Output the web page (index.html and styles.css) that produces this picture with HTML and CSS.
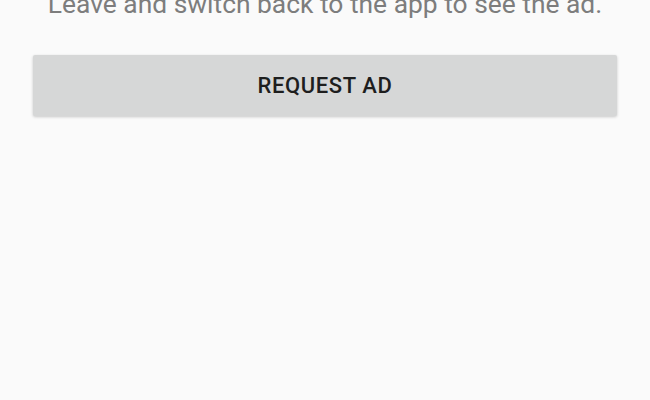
FILE: index.html
```html
<!DOCTYPE html>
<html lang="en">
<head>
    <meta charset="UTF-8">
    <meta name="viewport" content="width=device-width, initial-scale=1.0">
    <title>Ad Demo</title>
    <link rel="stylesheet" href="styles.css">
</head>
<body>
    <div class="layar">
        <!-- Keterangan -->
        <p class="info">Leave and switch back to the app to see the ad.</p>

        <!-- Tombol -->
        <button class="tombol-iklan">REQUEST AD</button>
    </div>
</body>
</html>
```
FILE: styles.css
```css
body {
    margin: 0;
    background-color: #fafafa;
    font-family: Roboto, "Noto Sans", sans-serif;
    height: 100vh;
    overflow: hidden;
}

.layar {
    display: flex;
    flex-direction: column;
    padding: 0 33px;
    margin-top: -12px;
}

.info {
    margin: 0;
    font-size: 26.4px;
    line-height: 32px;
    color: #7d7d7d;
    text-align: center;
}

.tombol-iklan {
    margin-top: 35px;
    height: 61px;
    border: none;
    border-radius: 2px;
    background-color: #d6d7d7;
    color: #1e1e1e;
    font-family: Roboto, sans-serif;
    font-size: 22px;
    font-weight: 500;
    letter-spacing: 0.6px;
    box-shadow: 0 1px 3px rgba(0,0,0,0.2);
}
```
